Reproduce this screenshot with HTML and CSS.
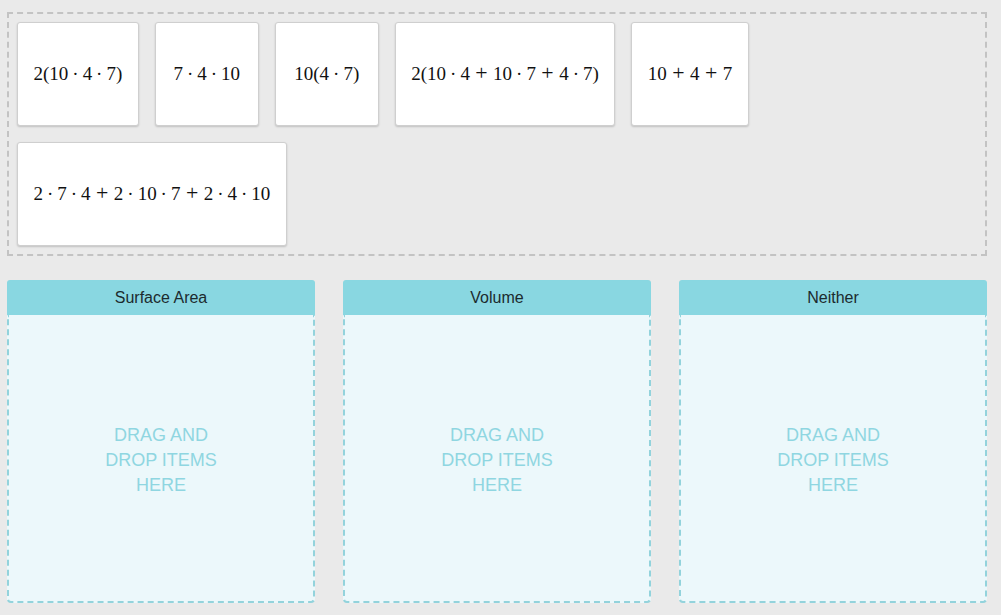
FILE: index.html
```html
<!DOCTYPE html>
<html>
<head>
<meta charset="utf-8">
<link rel="stylesheet" href="styles.css">
</head>
<body>
<div class="pool">
  <div class="card"><span class="m">2(10<i class="d">·</i>4<i class="d">·</i>7)</span></div>
  <div class="card"><span class="m">7<i class="d">·</i>4<i class="d">·</i>10</span></div>
  <div class="card"><span class="m">10(4<i class="d">·</i>7)</span></div>
  <div class="card"><span class="m">2(10<i class="d">·</i>4<i class="p">+</i>10<i class="d">·</i>7<i class="p">+</i>4<i class="d">·</i>7)</span></div>
  <div class="card"><span class="m">10<i class="p">+</i>4<i class="p">+</i>7</span></div>
  <div class="card"><span class="m">2<i class="d">·</i>7<i class="d">·</i>4<i class="p">+</i>2<i class="d">·</i>10<i class="d">·</i>7<i class="p">+</i>2<i class="d">·</i>4<i class="d">·</i>10</span></div>
</div>
<div class="bins">
  <div class="bin">
    <div class="bin-head">Surface Area</div>
    <div class="bin-body"><div class="hint">DRAG AND DROP ITEMS HERE</div></div>
  </div>
  <div class="bin">
    <div class="bin-head">Volume</div>
    <div class="bin-body"><div class="hint">DRAG AND DROP ITEMS HERE</div></div>
  </div>
  <div class="bin">
    <div class="bin-head">Neither</div>
    <div class="bin-body"><div class="hint">DRAG AND DROP ITEMS HERE</div></div>
  </div>
</div>
</body>
</html>
```

FILE: styles.css
```css
html, body {
  margin: 0;
  padding: 0;
  background: #eaeaea;
  font-family: "Liberation Sans", Arial, sans-serif;
}
body {
  padding: 12px 14px 0 7px;
  width: 980px;
}
.pool {
  border: 2px dashed #c3c3c3;
  padding: 8px;
  display: flex;
  flex-wrap: wrap;
  gap: 16px;
}
.card {
  height: 104px;
  min-width: 104px;
  box-sizing: border-box;
  background: #fff;
  border: 1px solid #cfcfcf;
  border-radius: 3px;
  box-shadow: 0 1px 2px rgba(0,0,0,0.18);
  display: flex;
  align-items: center;
  justify-content: center;
  padding: 0 15.5px;
}
.m {
  font-family: "Liberation Serif", "Times New Roman", serif;
  font-size: 19px;
  color: #111;
  white-space: nowrap;
}
.m i {
  font-style: normal;
}
.m .d {
  margin: 0 0.21em;
}
.m .p {
  font-size: 1.15em;
  margin: 0 0.25em;
  line-height: 1;
}
.bins {
  margin-top: 24px;
  display: flex;
  gap: 28px;
}
.bin {
  width: 308px;
}
.bin-head {
  height: 35px;
  background: #89d7e1;
  border-radius: 3px 3px 0 0;
  display: flex;
  align-items: center;
  justify-content: center;
  font-size: 16px;
  color: #1c2b2e;
}
.bin-body {
  height: 288px;
  box-sizing: border-box;
  padding-top: 4px;
  background: #ecf8fb;
  border: 2px dashed #93d3dc;
  border-top: none;
  border-radius: 0 0 4px 4px;
  display: flex;
  align-items: center;
  justify-content: center;
}
.hint {
  width: 120px;
  text-align: center;
  font-size: 18px;
  line-height: 25px;
  color: #8fd6e1;
}
```
